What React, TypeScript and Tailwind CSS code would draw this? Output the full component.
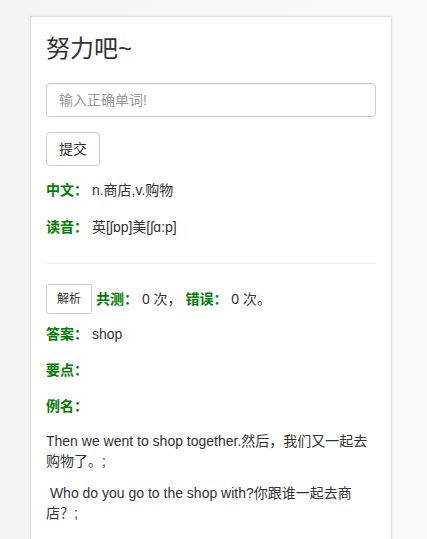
const font = { fontFamily: '"Liberation Sans", "Noto Sans CJK SC", sans-serif' };

// 标签 + 内容的一行
const Field = ({ label, value, className }: { label: string; value?: string; className?: string }) => (
    <div className={`leading-[20px] text-[14px] ${className ?? ''}`}>
        <b className="text-[#008000]">{label}</b>
        {value && <span> {value}</span>}
    </div>
);

export default function App() {
    return (
        <div style={font} className="w-[427px] h-[539px] overflow-hidden bg-gradient-to-r from-[#f4f4f4] to-[#fafafa] pl-[30px] pt-[16px] text-[#333]">
            <div className="w-[362px] min-h-[560px] bg-white border border-[#e2e2e2] shadow-[0_0_4px_rgba(0,0,0,0.06)] px-[15px] pt-[19px]">
                <h3 className="text-[24px] leading-[26px] font-normal text-[#333]">努力吧~</h3>

                <input
                    className="mt-[21px] block w-[330px] h-[34px] px-[12px] text-[14px] border border-[#ccc] rounded-[4px] shadow-[inset_0_1px_1px_rgba(0,0,0,0.075)] placeholder:text-[#999] outline-none"
                    placeholder="输入正确单词!"
                />

                <button className="mt-[15px] h-[34px] px-[12px] text-[14px] border border-[#ccc] rounded-[4px] bg-white text-[#333]">
                    提交
                </button>

                <Field className="mt-[14px]" label="中文：" value="n.商店,v.购物" />
                <Field className="mt-[17px]" label="读音：" value="英[ʃɒp]美[ʃɑ:p]" />

                <hr className="mt-[26px] border-0 border-t border-[#eee]" />

                <div className="mt-[20px] flex items-center gap-[4px] text-[14px]">
                    <button className="h-[30px] px-[10px] text-[12px] border border-[#ccc] rounded-[3px] bg-white text-[#333]">
                        解析
                    </button>
                    <span>
                        <b className="text-[#008000]">共测：</b> 0 次，{' '}
                        <b className="text-[#008000]">错误：</b> 0 次。
                    </span>
                </div>

                <Field className="mt-[10px]" label="答案：" value="shop" />
                <Field className="mt-[16px]" label="要点：" />
                <Field className="mt-[16px]" label="例名：" />

                <div className="mt-[15px] text-[14px] leading-[20px] flex flex-col gap-[12px]">
                    <p>Then we went to shop together.然后，我们又一起去购物了。;</p>
                    <p>&nbsp;Who do you go to the shop with?你跟谁一起去商店？;</p>
                    <p>&nbsp;Some like the look of shops and should be nice to go.</p>
                </div>
            </div>
        </div>
    );
}
